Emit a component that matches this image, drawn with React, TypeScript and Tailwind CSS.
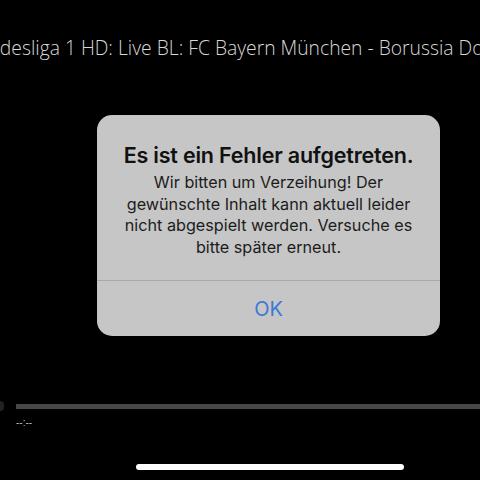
export default function App() {
  return (
    <main className="flex h-[480px] w-[480px] flex-col overflow-hidden bg-black">
      <div className="flex h-[96px] justify-center overflow-hidden pt-[35px]">
        <p className="shrink-0 whitespace-nowrap font-['Open_Sans',sans-serif] text-[19.3px] font-light leading-[26px] text-[#d8d8d8]">
          Sky Bundesliga 1 HD: Live BL: FC Bayern München - Borussia Dortmund
        </p>
      </div>

      <section className="ml-[97px] mt-[19px] flex h-[221px] w-[343px] flex-col rounded-[15px] bg-[#c6c6c6] font-['Inter',sans-serif]">
        <div className="flex h-[165px] flex-col items-center pt-[27px] text-center">
          <h2 className="text-[21.5px] font-semibold leading-[27px] tracking-[-0.2px] text-[#111]">
            Es ist ein Fehler aufgetreten.
          </h2>
          <p className="mt-[3px] px-4 text-[16.2px] leading-[21.5px] text-[#1c1c1c]">
            Wir bitten um Verzeihung! Der
            <br />
            gewünschte Inhalt kann aktuell leider
            <br />
            nicht abgespielt werden. Versuche es
            <br />
            bitte später erneut.
          </p>
        </div>
        <div className="h-px bg-[#a9a9a9]" />
        <button className="flex flex-1 items-center justify-center text-[20px] text-[#3b7ad6]">
          OK
        </button>
      </section>

      <div className="mt-[65px] flex items-center">
        <div className="h-[10px] w-[4px] rounded-r-full bg-[#222]" />
        <div className="ml-[12px] h-[5px] flex-1 bg-[#474747]" />
      </div>
      <div className="ml-[16px] mt-[6px] font-['Liberation_Sans',sans-serif] text-[10px] leading-[12px] text-[#bbb]">
        --:--
      </div>
      <div className="mt-[35px] flex">
        <div className="ml-[136px] h-[6px] w-[268px] rounded-full bg-white" />
      </div>
    </main>
  );
}
